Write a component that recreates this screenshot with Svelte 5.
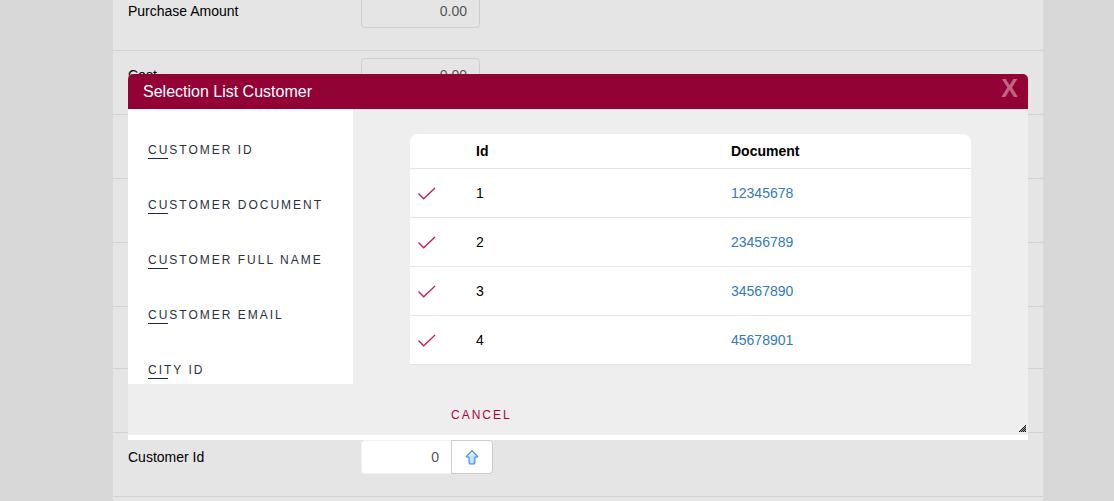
<script>
  const before = [
    { id: 'purchase', label: 'Purchase Amount', value: '0.00' },
    { id: 'cost', label: 'Cost', value: '0.00' }
  ];
  const filters = ['Customer Id', 'Customer Document', 'Customer Full Name', 'Customer Email', 'City Id'];
  const customers = [
    { id: 1, document: '12345678' },
    { id: 2, document: '23456789' },
    { id: 3, document: '34567890' },
    { id: 4, document: '45678901' }
  ];
</script>

<div class="page">
  <form class="sheet">
    {#each before as field}
      <div class="row">
        <label for={field.id}>{field.label}</label>
        <input id={field.id} value={field.value} />
      </div>
    {/each}
    <div class="row"></div>
    <div class="row"></div>
    <div class="row"></div>
    <div class="row short"></div>
    <div class="row"></div>
    <div class="row">
      <label for="customer">Customer Id</label>
      <div class="group">
        <input id="customer" class="lit" value="0" />
        <button type="button" class="pick" aria-label="Select customer">
          <svg width="14" height="16" viewBox="0 0 14 16">
            <defs>
              <linearGradient id="arrow" x1="0" y1="0" x2="1" y2="1">
                <stop offset="0" stop-color="#f4faff" />
                <stop offset="1" stop-color="#9ccdf8" />
              </linearGradient>
            </defs>
            <path d="M7 1.7 12.6 7.3V8H9.9V14L9.2 15H4.8L4.1 14V8H1.4V7.3Z" fill="url(#arrow)" stroke="#3b8ad8" stroke-width="1.1" stroke-linejoin="round" />
          </svg>
        </button>
      </div>
    </div>
    <div class="row"></div>
  </form>

  <div class="dialog" role="dialog" aria-labelledby="title">
    <header>
      <h1 id="title">Selection List Customer</h1>
      <button class="close" aria-label="Close">X</button>
    </header>
    <div class="body">
      <div class="columns">
        <nav>
          {#each filters as filter}
            <button class="filter">{filter}</button>
          {/each}
        </nav>
        <main>
          <table>
            <thead>
              <tr><th class="mark"></th><th class="key">Id</th><th>Document</th></tr>
            </thead>
            <tbody>
              {#each customers as customer}
                <tr>
                  <td>
                    <button class="check" aria-label="Select {customer.document}">
                      <svg width="18" height="14" viewBox="0 0 18 14">
                        <path d="M.5 7.5 5.7 12.8 17 2" fill="none" stroke="#c4195c" stroke-width="1.3" />
                      </svg>
                    </button>
                  </td>
                  <td>{customer.id}</td>
                  <td><a href="#{customer.document}">{customer.document}</a></td>
                </tr>
              {/each}
            </tbody>
          </table>
          <button class="cancel">Cancel</button>
        </main>
      </div>
      <svg class="grip" width="7" height="7" viewBox="0 0 7 7" shape-rendering="crispEdges">
        {#each [0, 1, 2, 3, 4, 5, 6] as y}
          {#each [0, 1, 2, 3, 4, 5, 6] as x}
            {#if x + y >= 6 && (x + y) % 2 === 0}
              <rect {x} {y} width="1" height="1" fill="#111" />
            {:else if x + y > 6}
              <rect {x} {y} width="1" height="1" fill="#aaa" />
            {/if}
          {/each}
        {/each}
      </svg>
    </div>
  </div>
</div>

<style>
  :global(body) {
    background: #d8d8d8;
  }
  .page {
    position: relative;
    height: 100vh;
    overflow: hidden;
    font: 14px/20px "Liberation Sans", Arial, sans-serif;
    color: #000;
  }
  .page * {
    box-sizing: border-box;
  }
  button,
  input {
    font: inherit;
    border: 0;
    margin: 0;
    padding: 0;
    background: none;
  }
  button {
    cursor: pointer;
  }
  .sheet {
    margin: -13px 71px 0 113px;
    background: #e5e5e5;
  }
  .row {
    display: grid;
    grid-template-columns: 233px 1fr;
    align-items: start;
    height: 64px;
    padding: 7px 15px;
    border-bottom: 1px solid #d2d2d2;
  }
  .short {
    height: 62px;
  }
  .row label {
    padding: 7px 0;
  }
  .row input {
    width: 119px;
    height: 34px;
    padding: 6px 12px;
    border: 1px solid #d0d0d0;
    border-radius: 4px;
    color: #555;
    text-align: right;
  }
  .group {
    display: flex;
  }
  .row input.lit {
    width: 90px;
    background: #fff;
    border-color: #f2f2f2;
    border-right: 0;
    border-radius: 4px 0 0 4px;
  }
  .pick {
    display: grid;
    place-items: center;
    width: 42px;
    height: 34px;
    background: #fff;
    border: 1px solid #ccc;
    border-radius: 0 4px 4px 0;
  }
  .dialog {
    position: absolute;
    top: 74px;
    left: 128px;
    right: 86px;
    padding-bottom: 5px;
    background: #fff;
    border-radius: 5px 5px 0 0;
  }
  header {
    display: flex;
    justify-content: space-between;
    align-items: center;
    height: 35px;
    padding: 0 10px 0 15px;
    background: #930234;
    border-radius: 5px 5px 0 0;
    color: #fff;
  }
  h1 {
    margin: 0;
    font-size: 16px;
    font-weight: 400;
  }
  .close {
    padding-bottom: 6px;
    font-size: 25px;
    line-height: 29px;
    font-weight: 700;
    color: #bd6785;
  }
  .body {
    position: relative;
    background: #eee;
  }
  .columns {
    display: grid;
    grid-template-columns: 225px 1fr;
    align-items: start;
  }
  nav {
    background: #fff;
  }
  .filter {
    position: relative;
    display: block;
    width: 100%;
    height: 55px;
    padding: 31px 20px 4px;
    text-align: left;
    color: #2a3142;
  }
  .filter::after {
    content: "";
    position: absolute;
    left: 20px;
    bottom: 5px;
    width: 20px;
    height: 1px;
    background: #1e2640;
  }
  .filter,
  .cancel {
    font-size: 12px;
    line-height: 20px;
    letter-spacing: 2px;
    text-transform: uppercase;
  }
  main {
    padding: 25px 57px 0;
  }
  table {
    width: 100%;
    table-layout: fixed;
    border-collapse: separate;
    border-spacing: 0;
    background: #fff;
    border-radius: 8px 8px 0 0;
  }
  th,
  td {
    padding: 0 8px;
    border-bottom: 1px solid #e5e5e5;
    text-align: left;
  }
  th {
    height: 35px;
  }
  td {
    height: 49px;
  }
  .mark {
    width: 58px;
  }
  .key {
    width: 255px;
  }
  .check {
    display: block;
    line-height: 0;
  }
  a {
    color: #337ab7;
    text-decoration: none;
  }
  .cancel {
    display: block;
    height: 40px;
    margin: 30px 0 0 41px;
    color: #b0003f;
  }
  .grip {
    position: absolute;
    right: 2px;
    bottom: 3px;
  }
</style>
